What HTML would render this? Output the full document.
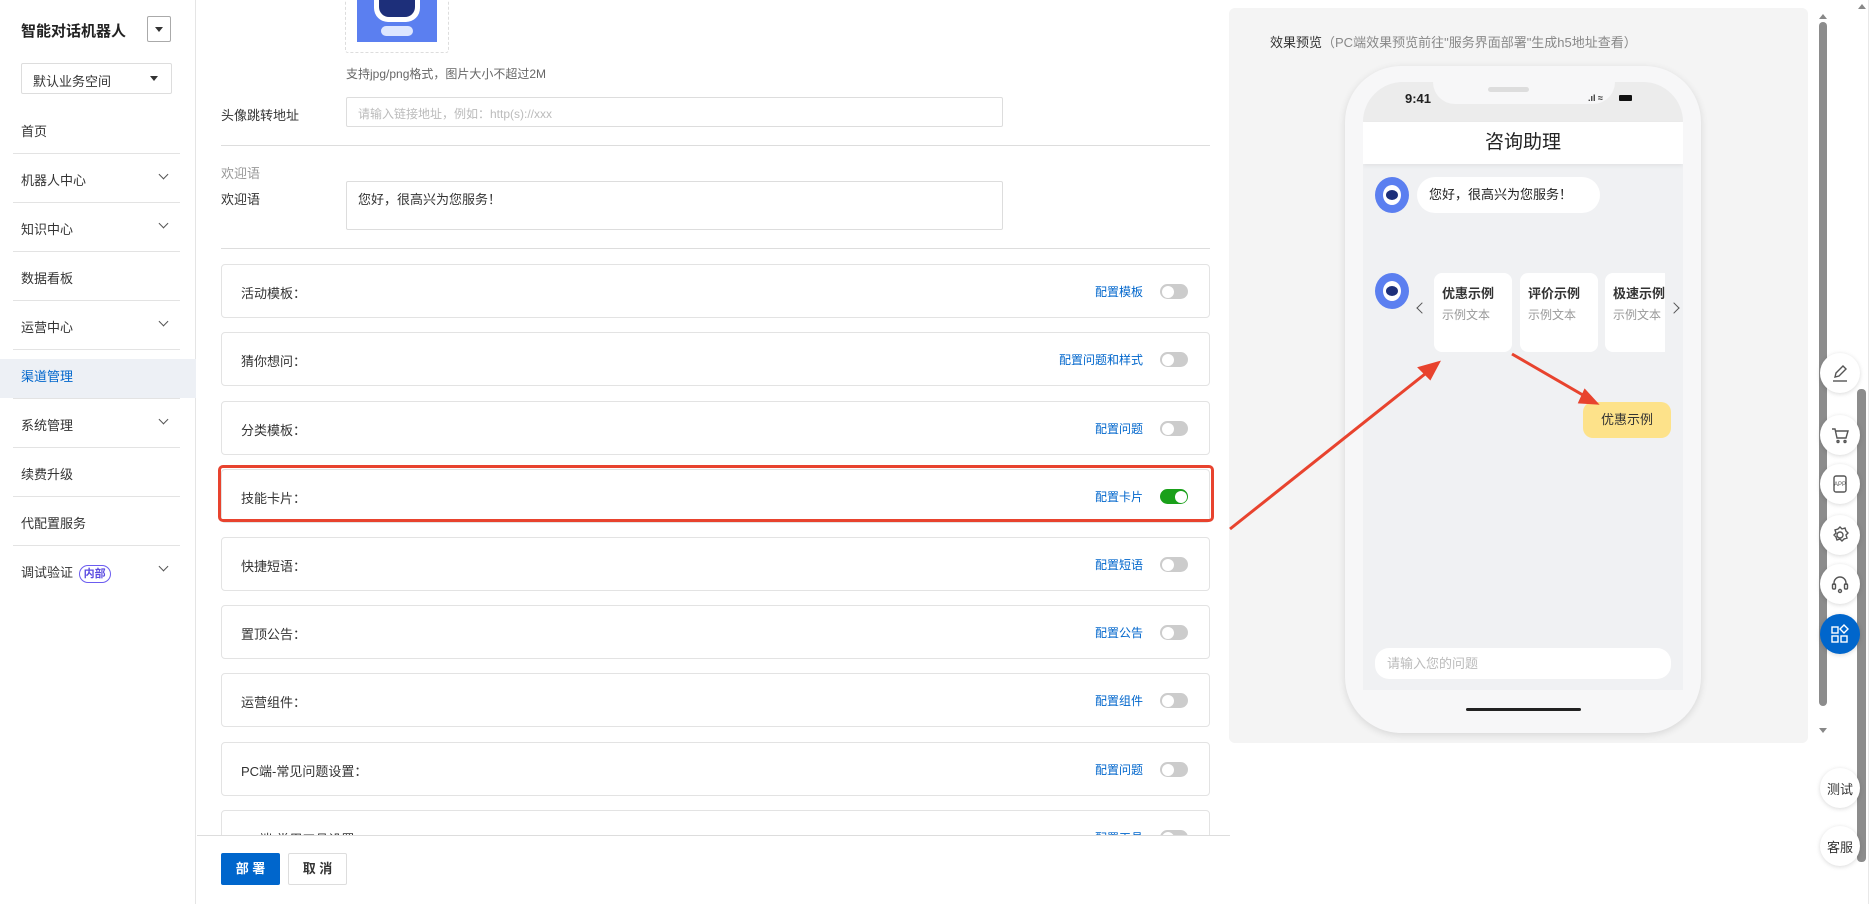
<!DOCTYPE html>
<html><head><meta charset="utf-8"><style>
*{box-sizing:border-box;margin:0;padding:0}
body{width:1875px;height:904px;overflow:hidden;background:#fff;font-family:"Liberation Sans","Noto Sans CJK SC",sans-serif;font-size:13px;color:#333;position:relative}
.abs{position:absolute}
.side{left:0;top:0;width:196px;height:904px;border-right:1px solid #e5e5e5;background:#fff}
.mi{position:absolute;left:21px;font-size:13px;color:#333}
.sep{position:absolute;left:13px;width:167px;height:1px;background:#e3e3e3}
.chev{position:absolute;left:160px;width:7px;height:7px;border-right:1.3px solid #555;border-bottom:1.3px solid #555;transform:rotate(45deg)}
.row{position:absolute;left:221px;width:989px;height:54px;border:1px solid #e3e3e3;border-radius:4px;background:#fff}
.row .t{position:absolute;left:19px;top:18px;font-size:13px;color:#333}
.row .l{position:absolute;right:66px;top:18px;font-size:12px;color:#0066cc}
.tg{position:absolute;right:21px;top:19px;width:28px;height:15px;border-radius:8px;background:#ccc}
.tg:after{content:"";position:absolute;left:1.5px;top:1.5px;width:12px;height:12px;border-radius:50%;background:#fff}
.tg.on{background:#1aa01a}.tg.on:after{left:14.5px}
.circ{position:absolute;left:1820px;width:40px;height:40px;border-radius:50%;background:#fff;box-shadow:0 1px 5px rgba(0,0,0,.15);display:flex;align-items:center;justify-content:center}
.card{position:absolute;top:273px;width:78px;height:79px;background:#fff;border-radius:8px;padding:10px 8px;overflow:hidden}
.card b{display:block;font-size:13px;color:#333;white-space:nowrap}
.card span{display:block;font-size:12px;color:#999;margin-top:4px;white-space:nowrap}
</style></head><body>
<div class="abs side">
 <div class="abs" style="left:21px;top:20px;font-size:15px;font-weight:bold;color:#222">智能对话机器人</div>
 <div class="abs" style="left:147px;top:16px;width:24px;height:26px;border:1px solid #aaa;border-radius:2px"><div class="abs" style="left:7px;top:10px;border-left:4px solid transparent;border-right:4px solid transparent;border-top:5px solid #333"></div></div>
 <div class="abs" style="left:21px;top:63px;width:151px;height:31px;border:1px solid #ddd;border-radius:2px"><span class="abs" style="left:11px;top:7px;font-size:13px">默认业务空间</span><div class="abs" style="left:128px;top:12px;border-left:4px solid transparent;border-right:4px solid transparent;border-top:5px solid #333"></div></div>
 <div class="abs" style="left:0;top:359px;width:196px;height:39px;background:#edf0f5"></div>
 <div class="mi" style="top:121px">首页</div>
 <div class="sep" style="top:153px"></div>
 <div class="mi" style="top:170px">机器人中心</div><div class="chev" style="top:171px"></div>
 <div class="sep" style="top:202px"></div>
 <div class="mi" style="top:219px">知识中心</div><div class="chev" style="top:220px"></div>
 <div class="sep" style="top:251px"></div>
 <div class="mi" style="top:268px">数据看板</div>
 <div class="sep" style="top:300px"></div>
 <div class="mi" style="top:317px">运营中心</div><div class="chev" style="top:318px"></div>
 <div class="sep" style="top:349px"></div>
 <div class="mi" style="top:366px;color:#0066cc">渠道管理</div>
 <div class="sep" style="top:398px"></div>
 <div class="mi" style="top:415px">系统管理</div><div class="chev" style="top:416px"></div>
 <div class="sep" style="top:447px"></div>
 <div class="mi" style="top:464px">续费升级</div>
 <div class="sep" style="top:496px"></div>
 <div class="mi" style="top:513px">代配置服务</div>
 <div class="sep" style="top:545px"></div>
 <div class="mi" style="top:562px">调试验证 <span style="display:inline-block;border:1.3px solid #6b5cf0;color:#5b4be0;border-radius:10px;font-size:11px;font-weight:bold;padding:0 4px;line-height:16px;margin-left:2px">内部</span></div><div class="chev" style="top:563px"></div>
</div>

<div class="abs" style="left:345px;top:-4px;width:104px;height:57px;border:1px dashed #ddd;border-radius:3px"></div>
<div class="abs" style="left:357px;top:0;width:80px;height:42px;background:#5b7ff0">
 <div class="abs" style="left:17px;top:0;width:46px;height:22px;background:#fff;border-radius:0 0 14px 14px"></div>
 <div class="abs" style="left:22px;top:0;width:36px;height:17px;background:#1d2f7a;border-radius:0 0 10px 10px"></div>
 <div class="abs" style="left:24px;top:26px;width:32px;height:10px;background:#dde6ff;border-radius:6px"></div>
</div>
<div class="abs" style="left:346px;top:65px;font-size:12px;color:#666">支持jpg/png格式，图片大小不超过2M</div>
<div class="abs" style="left:221px;top:105px;font-size:13px">头像跳转地址</div>
<div class="abs" style="left:346px;top:97px;width:657px;height:30px;border:1px solid #ddd;border-radius:2px;padding:7px 11px;font-size:12px;color:#bbb">请输入链接地址，例如：http(s)://xxx</div>
<div class="abs" style="left:221px;top:145px;width:989px;height:1px;background:#ddd"></div>
<div class="abs" style="left:221px;top:163px;font-size:13px;color:#999">欢迎语</div>
<div class="abs" style="left:221px;top:189px;font-size:13px">欢迎语</div>
<div class="abs" style="left:346px;top:181px;width:657px;height:49px;border:1px solid #ddd;border-radius:2px;padding:7px 11px;font-size:13px;color:#333">您好，很高兴为您服务！</div>
<div class="abs" style="left:221px;top:248px;width:989px;height:1px;background:#ddd"></div>

<div class="row" style="top:264px"><span class="t">活动模板：</span><span class="l">配置模板</span><div class="tg"></div></div>
<div class="row" style="top:332px"><span class="t">猜你想问：</span><span class="l">配置问题和样式</span><div class="tg"></div></div>
<div class="row" style="top:401px"><span class="t">分类模板：</span><span class="l">配置问题</span><div class="tg"></div></div>
<div class="row" style="top:469px"><span class="t">技能卡片：</span><span class="l">配置卡片</span><div class="tg on"></div></div>
<div class="abs" style="left:218px;top:465px;width:996px;height:57px;border:3px solid #e8432e;border-radius:5px"></div>
<div class="row" style="top:537px"><span class="t">快捷短语：</span><span class="l">配置短语</span><div class="tg"></div></div>
<div class="row" style="top:605px"><span class="t">置顶公告：</span><span class="l">配置公告</span><div class="tg"></div></div>
<div class="row" style="top:673px"><span class="t">运营组件：</span><span class="l">配置组件</span><div class="tg"></div></div>
<div class="row" style="top:742px"><span class="t">PC端-常见问题设置：</span><span class="l">配置问题</span><div class="tg"></div></div>
<div class="row" style="top:810px"><span class="t">PC端-常用工具设置：</span><span class="l">配置工具</span><div class="tg"></div></div>
<div class="abs" style="left:197px;top:835px;width:1033px;height:72px;background:#fff;border-top:1px solid #ddd"></div>
<div class="abs" style="left:221px;top:853px;width:59px;height:32px;background:#0066cc;color:#fff;font-weight:bold;font-size:13px;text-align:center;line-height:32px;border-radius:2px">部 署</div>
<div class="abs" style="left:288px;top:853px;width:59px;height:32px;border:1px solid #ddd;color:#333;font-weight:bold;font-size:13px;text-align:center;line-height:30px;border-radius:2px">取 消</div>

<div class="abs" style="left:1229px;top:8px;width:579px;height:735px;background:#f4f4f4;border-radius:6px"></div>
<div class="abs" style="left:1270px;top:32px;font-size:13px;color:#333">效果预览<span style="color:#888">（PC端效果预览前往"服务界面部署"生成h5地址查看）</span></div>
<div class="abs" style="left:1345px;top:66px;width:356px;height:667px;background:#f7f7f8;border-radius:56px;box-shadow:0 2px 8px rgba(0,0,0,.12)"></div>
<div class="abs" style="left:1363px;top:82px;width:320px;height:608px;background:#f0f1f3;border-radius:40px 40px 0 0;overflow:hidden">
 <div class="abs" style="left:0;top:0;width:320px;height:40px;background:#ececec"></div>
 <div class="abs" style="left:70px;top:-16px;width:182px;height:38px;background:#f7f7f8;border-radius:0 0 22px 22px"></div>
 <div class="abs" style="left:125px;top:5px;width:41px;height:5px;background:#ddd;border-radius:3px"></div>
 <div class="abs" style="left:42px;top:9px;font-size:13px;font-weight:bold;color:#222">9:41</div>
 <div class="abs" style="left:225px;top:11px;font-size:9px;font-weight:bold">.ıl ≈</div>
 <div class="abs" style="left:256px;top:13px;width:13px;height:6px;background:#111;border-radius:1px"></div>
 <div class="abs" style="left:0;top:40px;width:320px;height:42px;background:#fff;box-shadow:0 2px 4px rgba(0,0,0,.06);text-align:center;line-height:42px;font-size:19px;color:#222">咨询助理</div>
</div>
<div class="abs" style="left:1375px;top:177px;width:34px;height:36px;border-radius:50%;background:#5b7ff0"><div class="abs" style="left:8px;top:8px;width:18px;height:20px;border-radius:50%;background:#fff"></div><div class="abs" style="left:11px;top:13px;width:12px;height:10px;border-radius:50%;background:#1d2f7a"></div></div>
<div class="abs" style="left:1417px;top:177px;width:183px;height:36px;background:#fff;border-radius:18px;padding:0 12px;line-height:36px;font-size:13px;color:#222">您好，很高兴为您服务！</div>
<div class="abs" style="left:1375px;top:273px;width:34px;height:36px;border-radius:50%;background:#5b7ff0"><div class="abs" style="left:8px;top:8px;width:18px;height:20px;border-radius:50%;background:#fff"></div><div class="abs" style="left:11px;top:13px;width:12px;height:10px;border-radius:50%;background:#1d2f7a"></div></div>
<div class="abs" style="left:1418px;top:304px;width:8px;height:8px;border-left:1.3px solid #555;border-bottom:1.3px solid #555;transform:rotate(45deg)"></div>
<div class="abs" style="left:1670px;top:304px;width:8px;height:8px;border-right:1.3px solid #555;border-top:1.3px solid #555;transform:rotate(45deg)"></div>
<div class="card" style="left:1434px"><b>优惠示例</b><span>示例文本</span></div>
<div class="card" style="left:1520px"><b>评价示例</b><span>示例文本</span></div>
<div class="card" style="left:1605px;width:60px;border-radius:8px 0 0 8px"><b>极速示例</b><span>示例文本</span></div>
<div class="abs" style="left:1583px;top:402px;width:88px;height:36px;background:#fde28a;border-radius:10px;text-align:center;line-height:36px;font-size:13px;color:#333">优惠示例</div>
<div class="abs" style="left:1375px;top:648px;width:296px;height:31px;background:#fff;border-radius:14px;padding:0 12px;line-height:31px;font-size:13px;color:#bbb">请输入您的问题</div>
<div class="abs" style="left:1466px;top:708px;width:115px;height:3px;background:#222;border-radius:2px"></div>
<svg class="abs" style="left:0;top:0" width="1875" height="904"><g stroke="#e8432e" stroke-width="3" fill="#e8432e">
<line x1="1230" y1="529" x2="1430" y2="370"/><polygon points="1438,363 1420,368 1430,378"/>
<line x1="1512" y1="354" x2="1588" y2="398"/><polygon points="1596,403 1585,391 1580,402"/></g></svg>

<div class="abs" style="left:1818px;top:14px;width:10px;height:720px"><div class="abs" style="left:1px;top:0;border-left:4px solid transparent;border-right:4px solid transparent;border-bottom:5px solid #888"></div><div class="abs" style="left:1px;top:8px;width:8px;height:684px;background:#8c8c8c;border-radius:4px"></div><div class="abs" style="left:1px;top:714px;border-left:4px solid transparent;border-right:4px solid transparent;border-top:5px solid #888"></div></div>
<div class="abs" style="left:1858px;top:4px;border-left:4px solid transparent;border-right:4px solid transparent;border-bottom:5px solid #888"></div>
<div class="abs" style="left:1857px;top:389px;width:9px;height:473px;background:#8c8c8c;border-radius:4px"></div>
<div class="abs" style="left:1868px;top:0;width:1px;height:904px;background:#e8e8e8"></div>

<div class="circ" style="top:353px"><svg width="20" height="20" fill="none" stroke="#555" stroke-width="1.4"><path d="M5 14l1-4 7-7 3 3-7 7z"/><path d="M3 18h14"/></svg></div>
<div class="circ" style="top:415px"><svg width="20" height="20" fill="none" stroke="#555" stroke-width="1.4"><path d="M2 4h3l2 9h9l2-7H6"/><circle cx="8" cy="16.5" r="1"/><circle cx="15" cy="16.5" r="1"/></svg></div>
<div class="circ" style="top:464px"><svg width="20" height="20" fill="none" stroke="#555" stroke-width="1.4"><rect x="4" y="2" width="12" height="16" rx="2"/><text x="10" y="12" font-size="6" text-anchor="middle" fill="#555" stroke="none" font-family="Liberation Sans">APP</text></svg></div>
<div class="circ" style="top:515px"><svg width="20" height="20" fill="none" stroke="#555" stroke-width="1.4"><circle cx="10" cy="10" r="3"/><path d="M10 2l2 2 3-1 1 3 2 2-2 2 1 3-3 1-2 2-2-2-3 1-1-3-2-2 2-2-1-3 3-1z"/></svg></div>
<div class="circ" style="top:564px"><svg width="20" height="20" fill="none" stroke="#555" stroke-width="1.4"><path d="M4 11V9a6 6 0 0112 0v2"/><rect x="2.5" y="10" width="3" height="5" rx="1"/><rect x="14.5" y="10" width="3" height="5" rx="1"/><circle cx="10" cy="17" r="1.5"/></svg></div>
<div class="circ" style="top:614px;background:#0066cc"><svg width="20" height="20" fill="none" stroke="#fff" stroke-width="1.4"><rect x="2" y="3" width="6" height="6"/><rect x="2" y="12" width="6" height="6"/><rect x="11" y="12" width="6" height="6"/><path d="M14 1l4 4-4 4-4-4z"/></svg></div>
<div class="circ" style="top:768px;font-size:13px;color:#333">测试</div>
<div class="circ" style="top:826px;font-size:13px;color:#333">客服</div>
</body></html>
